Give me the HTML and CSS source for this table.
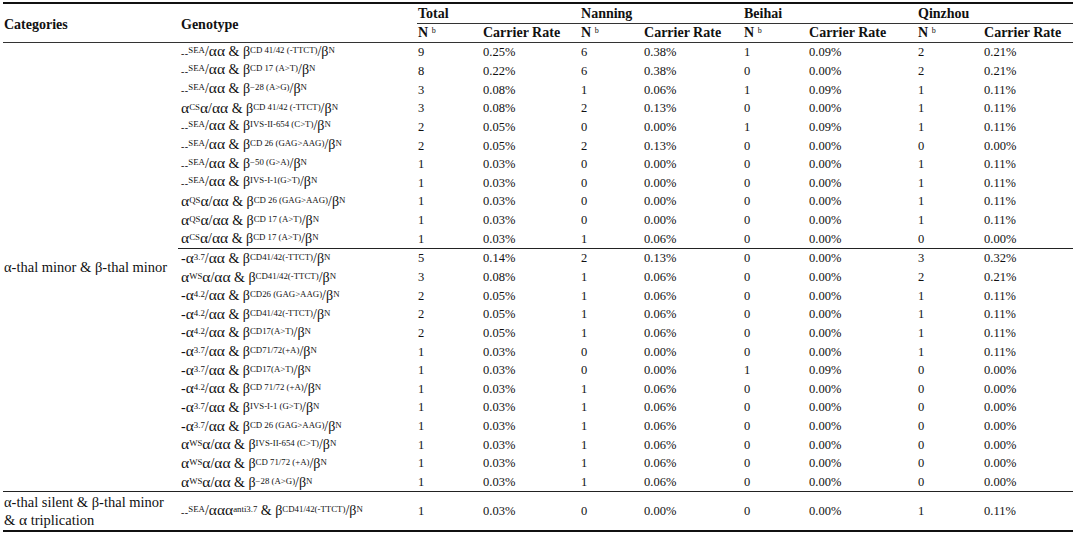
FILE: index.html
```html
<!DOCTYPE html>
<html lang="en">
<head>
<meta charset="utf-8">
<title>Thalassemia carrier table</title>
<link rel="stylesheet" href="styles.css">
</head>
<body>
<table class="tbl">
  <colgroup>
    <col class="c-cat"><col class="c-geno">
    <col class="c-tn"><col class="c-tcr">
    <col class="c-nn"><col class="c-ncr">
    <col class="c-bn"><col class="c-bcr">
    <col class="c-qn"><col class="c-qcr">
  </colgroup>
  <thead>
    <tr class="h1">
      <th rowspan="2" class="hcat">Categories</th>
      <th rowspan="2" class="hgeno">Genotype</th>
      <th colspan="2" class="grp">Total</th>
      <th colspan="2" class="grp">Nanning</th>
      <th colspan="2" class="grp">Beihai</th>
      <th colspan="2" class="grp">Qinzhou</th>
    </tr>
    <tr class="h2">
      <th>N <sup class="hb">b</sup></th><th>Carrier Rate</th>
      <th>N <sup class="hb">b</sup></th><th>Carrier Rate</th>
      <th>N <sup class="hb">b</sup></th><th>Carrier Rate</th>
      <th>N <sup class="hb">b</sup></th><th>Carrier Rate</th>
    </tr>
  </thead>
  <tbody>
    <tr>
      <td rowspan="24" class="cat endgrp">α-thal minor &amp; β-thal minor</td>
      <td class="geno"><span class="dd">--</span><sup>SEA</sup>/<span class="a">αα</span> &amp; β<sup>CD 41/42 (-TTCT)</sup>/β<sup>N</sup></td>
      <td>9</td><td>0.25%</td><td>6</td><td>0.38%</td><td>1</td><td>0.09%</td><td>2</td><td>0.21%</td>
    </tr>
    <tr>
      <td class="geno"><span class="dd">--</span><sup>SEA</sup>/<span class="a">αα</span> &amp; β<sup>CD 17 (A&gt;T)</sup>/β<sup>N</sup></td>
      <td>8</td><td>0.22%</td><td>6</td><td>0.38%</td><td>0</td><td>0.00%</td><td>2</td><td>0.21%</td>
    </tr>
    <tr>
      <td class="geno"><span class="dd">--</span><sup>SEA</sup>/<span class="a">αα</span> &amp; β<sup>−28 (A&gt;G)</sup>/β<sup>N</sup></td>
      <td>3</td><td>0.08%</td><td>1</td><td>0.06%</td><td>1</td><td>0.09%</td><td>1</td><td>0.11%</td>
    </tr>
    <tr>
      <td class="geno"><span class="a">α</span><sup>CS</sup><span class="a">α</span>/<span class="a">αα</span> &amp; β<sup>CD 41/42 (-TTCT)</sup>/β<sup>N</sup></td>
      <td>3</td><td>0.08%</td><td>2</td><td>0.13%</td><td>0</td><td>0.00%</td><td>1</td><td>0.11%</td>
    </tr>
    <tr>
      <td class="geno"><span class="dd">--</span><sup>SEA</sup>/<span class="a">αα</span> &amp; β<sup>IVS-II-654 (C&gt;T)</sup>/β<sup>N</sup></td>
      <td>2</td><td>0.05%</td><td>0</td><td>0.00%</td><td>1</td><td>0.09%</td><td>1</td><td>0.11%</td>
    </tr>
    <tr>
      <td class="geno"><span class="dd">--</span><sup>SEA</sup>/<span class="a">αα</span> &amp; β<sup>CD 26 (GAG&gt;AAG)</sup>/β<sup>N</sup></td>
      <td>2</td><td>0.05%</td><td>2</td><td>0.13%</td><td>0</td><td>0.00%</td><td>0</td><td>0.00%</td>
    </tr>
    <tr>
      <td class="geno"><span class="dd">--</span><sup>SEA</sup>/<span class="a">αα</span> &amp; β<sup>−50 (G&gt;A)</sup>/β<sup>N</sup></td>
      <td>1</td><td>0.03%</td><td>0</td><td>0.00%</td><td>0</td><td>0.00%</td><td>1</td><td>0.11%</td>
    </tr>
    <tr>
      <td class="geno"><span class="dd">--</span><sup>SEA</sup>/<span class="a">αα</span> &amp; β<sup>IVS-I-1(G&gt;T)</sup>/β<sup>N</sup></td>
      <td>1</td><td>0.03%</td><td>0</td><td>0.00%</td><td>0</td><td>0.00%</td><td>1</td><td>0.11%</td>
    </tr>
    <tr>
      <td class="geno"><span class="a">α</span><sup>QS</sup><span class="a">α</span>/<span class="a">αα</span> &amp; β<sup>CD 26 (GAG&gt;AAG)</sup>/β<sup>N</sup></td>
      <td>1</td><td>0.03%</td><td>0</td><td>0.00%</td><td>0</td><td>0.00%</td><td>1</td><td>0.11%</td>
    </tr>
    <tr>
      <td class="geno"><span class="a">α</span><sup>QS</sup><span class="a">α</span>/<span class="a">αα</span> &amp; β<sup>CD 17 (A&gt;T)</sup>/β<sup>N</sup></td>
      <td>1</td><td>0.03%</td><td>0</td><td>0.00%</td><td>0</td><td>0.00%</td><td>1</td><td>0.11%</td>
    </tr>
    <tr class="sep">
      <td class="geno"><span class="a">α</span><sup>CS</sup><span class="a">α</span>/<span class="a">αα</span> &amp; β<sup>CD 17 (A&gt;T)</sup>/β<sup>N</sup></td>
      <td>1</td><td>0.03%</td><td>1</td><td>0.06%</td><td>0</td><td>0.00%</td><td>0</td><td>0.00%</td>
    </tr>
    <tr>
      <td class="geno">-<span class="a">α</span><sup>3.7</sup>/<span class="a">αα</span> &amp; β<sup>CD41/42(-TTCT)</sup>/β<sup>N</sup></td>
      <td>5</td><td>0.14%</td><td>2</td><td>0.13%</td><td>0</td><td>0.00%</td><td>3</td><td>0.32%</td>
    </tr>
    <tr>
      <td class="geno"><span class="a">α</span><sup>WS</sup><span class="a">α</span>/<span class="a">αα</span> &amp; β<sup>CD41/42(-TTCT)</sup>/β<sup>N</sup></td>
      <td>3</td><td>0.08%</td><td>1</td><td>0.06%</td><td>0</td><td>0.00%</td><td>2</td><td>0.21%</td>
    </tr>
    <tr>
      <td class="geno">-<span class="a">α</span><sup>4.2</sup>/<span class="a">αα</span> &amp; β<sup>CD26 (GAG&gt;AAG)</sup>/β<sup>N</sup></td>
      <td>2</td><td>0.05%</td><td>1</td><td>0.06%</td><td>0</td><td>0.00%</td><td>1</td><td>0.11%</td>
    </tr>
    <tr>
      <td class="geno">-<span class="a">α</span><sup>4.2</sup>/<span class="a">αα</span> &amp; β<sup>CD41/42(-TTCT)</sup>/β<sup>N</sup></td>
      <td>2</td><td>0.05%</td><td>1</td><td>0.06%</td><td>0</td><td>0.00%</td><td>1</td><td>0.11%</td>
    </tr>
    <tr>
      <td class="geno">-<span class="a">α</span><sup>4.2</sup>/<span class="a">αα</span> &amp; β<sup>CD17(A&gt;T)</sup>/β<sup>N</sup></td>
      <td>2</td><td>0.05%</td><td>1</td><td>0.06%</td><td>0</td><td>0.00%</td><td>1</td><td>0.11%</td>
    </tr>
    <tr>
      <td class="geno">-<span class="a">α</span><sup>3.7</sup>/<span class="a">αα</span> &amp; β<sup>CD71/72(+A)</sup>/β<sup>N</sup></td>
      <td>1</td><td>0.03%</td><td>0</td><td>0.00%</td><td>0</td><td>0.00%</td><td>1</td><td>0.11%</td>
    </tr>
    <tr>
      <td class="geno">-<span class="a">α</span><sup>3.7</sup>/<span class="a">αα</span> &amp; β<sup>CD17(A&gt;T)</sup>/β<sup>N</sup></td>
      <td>1</td><td>0.03%</td><td>0</td><td>0.00%</td><td>1</td><td>0.09%</td><td>0</td><td>0.00%</td>
    </tr>
    <tr>
      <td class="geno">-<span class="a">α</span><sup>4.2</sup>/<span class="a">αα</span> &amp; β<sup>CD 71/72 (+A)</sup>/β<sup>N</sup></td>
      <td>1</td><td>0.03%</td><td>1</td><td>0.06%</td><td>0</td><td>0.00%</td><td>0</td><td>0.00%</td>
    </tr>
    <tr>
      <td class="geno">-<span class="a">α</span><sup>3.7</sup>/<span class="a">αα</span> &amp; β<sup>IVS-I-1 (G&gt;T)</sup>/β<sup>N</sup></td>
      <td>1</td><td>0.03%</td><td>1</td><td>0.06%</td><td>0</td><td>0.00%</td><td>0</td><td>0.00%</td>
    </tr>
    <tr>
      <td class="geno">-<span class="a">α</span><sup>3.7</sup>/<span class="a">αα</span> &amp; β<sup>CD 26 (GAG&gt;AAG)</sup>/β<sup>N</sup></td>
      <td>1</td><td>0.03%</td><td>1</td><td>0.06%</td><td>0</td><td>0.00%</td><td>0</td><td>0.00%</td>
    </tr>
    <tr>
      <td class="geno"><span class="a">α</span><sup>WS</sup><span class="a">α</span>/<span class="a">αα</span> &amp; β<sup>IVS-II-654 (C&gt;T)</sup>/β<sup>N</sup></td>
      <td>1</td><td>0.03%</td><td>1</td><td>0.06%</td><td>0</td><td>0.00%</td><td>0</td><td>0.00%</td>
    </tr>
    <tr>
      <td class="geno"><span class="a">α</span><sup>WS</sup><span class="a">α</span>/<span class="a">αα</span> &amp; β<sup>CD 71/72 (+A)</sup>/β<sup>N</sup></td>
      <td>1</td><td>0.03%</td><td>1</td><td>0.06%</td><td>0</td><td>0.00%</td><td>0</td><td>0.00%</td>
    </tr>
    <tr class="endgrp">
      <td class="geno"><span class="a">α</span><sup>WS</sup><span class="a">α</span>/<span class="a">αα</span> &amp; β<sup>−28 (A&gt;G)</sup>/β<sup>N</sup></td>
      <td>1</td><td>0.03%</td><td>1</td><td>0.06%</td><td>0</td><td>0.00%</td><td>0</td><td>0.00%</td>
    </tr>
    <tr class="last">
      <td class="cat cat2">α-thal silent &amp; β-thal minor<br>&amp; <span class="a">α</span> triplication</td>
      <td class="geno"><span class="dd">--</span><sup>SEA</sup>/<span class="a">ααα</span><sup>anti3.7</sup> &amp; β<sup>CD41/42(-TTCT)</sup>/β<sup>N</sup></td>
      <td>1</td><td>0.03%</td><td>0</td><td>0.00%</td><td>0</td><td>0.00%</td><td>1</td><td>0.11%</td>
    </tr>
  </tbody>
</table>
</body>
</html>
```

FILE: styles.css
```css
html, body {
  margin: 0;
  padding: 0;
  background: #ffffff;
}

body {
  font-family: "Liberation Serif", "DejaVu Serif", serif;
  color: #111111;
}

.tbl {
  margin: 2px 0 0 3px;
  width: 1070px;
  table-layout: fixed;
  border-collapse: collapse;
  border-top: 2px solid #111111;
  border-bottom: 2px solid #111111;
}

.c-cat { width: 175px; }
.c-geno { width: 239px; }
.c-tn { width: 65px; }
.c-tcr { width: 98px; }
.c-nn { width: 63px; }
.c-ncr { width: 100px; }
.c-bn { width: 65px; }
.c-bcr { width: 109px; }
.c-qn { width: 66px; }
.c-qcr { width: 90px; }

th {
  font-weight: bold;
  font-size: 14px;
  text-align: left;
  padding: 0 0 0 1px;
  white-space: nowrap;
  line-height: 16px;
}

.h1 th { height: 18px; padding-top: 1px; }
.h2 th { height: 18px; border-bottom: 1px solid #333333; }
.h1 .grp { border-bottom: 1px solid #333333; vertical-align: middle; }
.hcat, .hgeno {
  vertical-align: middle;
  border-bottom: 1px solid #333333;
}
.h1 .hcat, .h1 .hgeno { padding-top: 4px; }
.hgeno { padding-left: 3px; }

.hb {
  font-size: 8px;
  font-weight: normal;
  vertical-align: 4px;
  line-height: 0;
}

td {
  font-size: 12.5px;
  padding: 0 0 0 1px;
  height: 18.65px;
  line-height: 14px;
  white-space: nowrap;
  vertical-align: middle;
}

td.geno {
  font-size: 14px;
  padding-left: 3px;
}

td.geno sup {
  font-size: 8.8px;
  vertical-align: 3.5px;
  line-height: 0;
}

.a {
  font-size: 15.5px;
}

.dd {
  font-size: 10px;
  letter-spacing: 0.3px;
  vertical-align: -1px;
}

td.cat {
  font-size: 14.5px;
  line-height: 18px;
  vertical-align: middle;
  padding-left: 1px;
}

.sep td { border-bottom: 1px solid #222222; }
.endgrp td, td.endgrp { border-bottom: 1px solid #222222; }

.last td {
  height: 38px;
  padding: 0 0 0 1px;
}

.last td.geno { padding-left: 3px; }

.cat2 {
  white-space: nowrap;
  line-height: 19px;
}
```
